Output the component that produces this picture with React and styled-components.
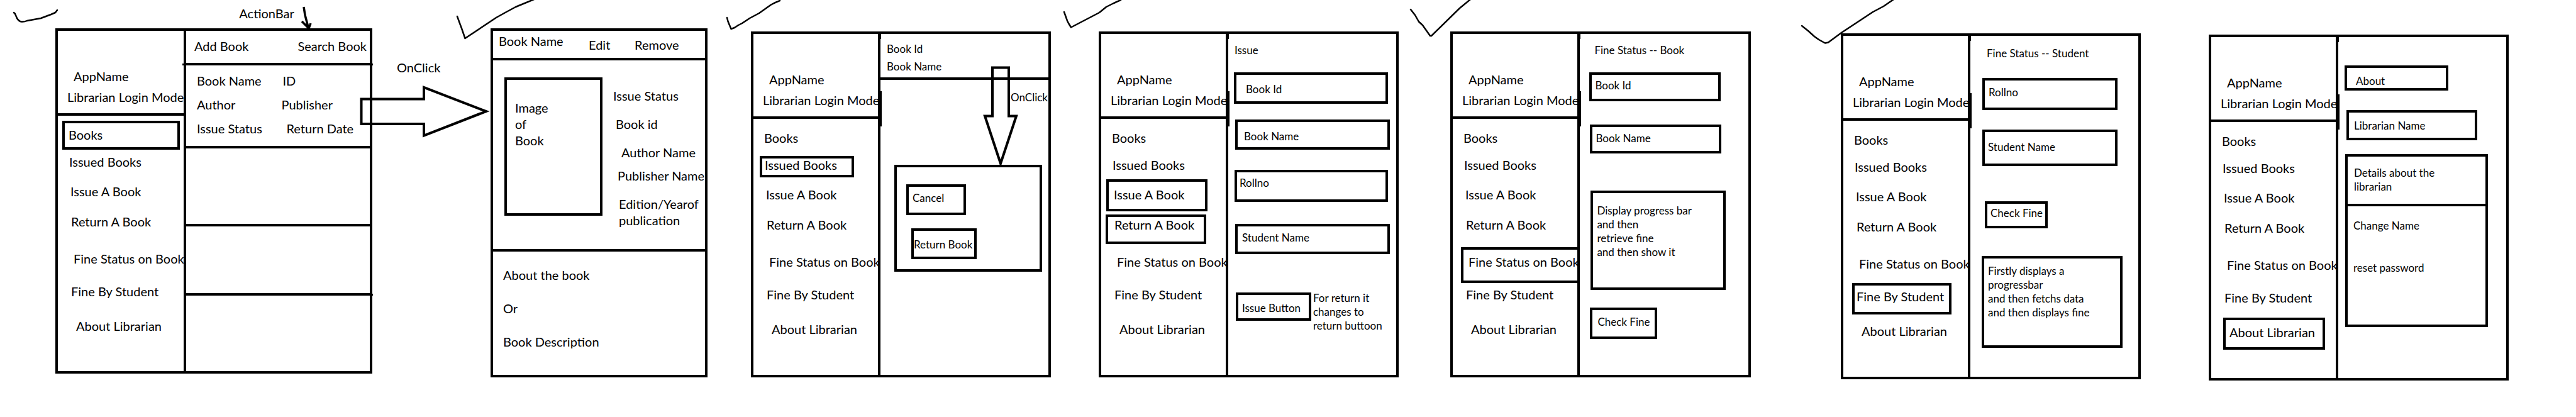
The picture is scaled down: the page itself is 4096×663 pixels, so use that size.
import React from "react";
import styled, { createGlobalStyle } from "styled-components";

const GlobalStyle = createGlobalStyle`
  * { box-sizing: border-box; }
  body { margin: 0; background: #fff; }
  h1, h2, p, ul { margin: 0; padding: 0; font: inherit; }
  ul { list-style: none; }
`;

const ink = "#000";
const stroke = `4px solid ${ink}`;
const flex = (n) => `minmax(0, ${n}fr)`;
const columns = (...parts) => parts.map(flex).join(" ");

/* ---------- board ---------- */

const Board = styled.main`
  position: relative;
  display: grid;
  grid-template-columns: ${columns(88, 504, 188, 345, 69, 477, 76, 477, 82, 478, 143, 477, 108, 477, 107)};
  align-items: start;
  padding-bottom: 57px;
  overflow: hidden;
  color: ${ink};
  background: #fff;
  font: 20px/26px Lato, "Open Sans", sans-serif;
  white-space: nowrap;
`;

const Slot = styled.section`
  grid-column: ${(p) => p.$col};
  grid-row: 1;
  padding-top: ${(p) => p.$top || 0}px;
`;

const Caption = styled.p`
  height: 45px;
  padding: 8px 0 0 58%;
`;

const FlowNote = styled.p`
  grid-column: 3;
  grid-row: 1;
  padding: 94px 0 0 39px;
`;

const Screen = styled.div`
  display: grid;
  grid-template-columns: ${(p) => p.$split || columns(202, 267)};
  height: ${(p) => p.$height || 550}px;
  border: ${stroke};
`;

const Markup = styled.svg`
  position: absolute;
  top: 0;
  left: 0;
  width: 100%;
  height: auto;
  pointer-events: none;
`;

/* ---------- sidebar ---------- */

const Sidebar = styled.aside`
  border-right: ${stroke};
`;

const SideHeader = styled.header`
  display: flex;
  flex-direction: column;
  gap: 7px;
  height: 135px;
  padding: 59px 0 0 15px;
  border-bottom: ${stroke};
`;

const AppTitle = styled.h1`
  padding-left: 10px;
`;

const NavItem = styled.li`
  margin: ${(p) => p.$gap}px 0 0 ${(p) => p.$left}px;
`;

const NavLink = styled.a`
  display: block;
  width: ${(p) => (p.$width ? `${p.$width}px` : "100%")};
  height: ${(p) => p.$height}px;
  padding: ${(p) => p.$pad};
  border: 4px solid ${(p) => (p.$boxed ? ink : "transparent")};
  ${(p) => !p.$width && "border-right: 0;"}
  color: inherit;
  line-height: 18px;
  text-decoration: none;
`;

const NAV = [
  { label: "Books", gap: 8, left: 7, width: 187, height: 46, pad: "9px 0 0 6px" },
  { label: "Issued Books", gap: 5, left: 10, width: 150, height: 34, pad: "1px 0 0 4px" },
  { label: "Issue A Book", gap: 3, left: 8, width: 161, height: 51, pad: "11px 0 0 8px" },
  { label: "Return A Book", gap: 5, left: 7, width: 160, height: 47, pad: "3px 0 0 10px" },
  { label: "Fine Status on Book", gap: 5, left: 13, height: 57, pad: "10px 0 0 8px" },
  { label: "Fine By Student", gap: -3, left: 14, width: 158, height: 50, pad: "8px 0 0 3px" },
  { label: "About Librarian", gap: 3, left: 19, width: 162, height: 51, pad: "10px 0 0 6px" },
];

function Menu({ boxed }) {
  return (
    <Sidebar>
      <SideHeader>
        <AppTitle>AppName</AppTitle>
        <p>Librarian Login Mode</p>
      </SideHeader>
      <nav>
        <ul>
          {NAV.map((n) => (
            <NavItem key={n.label} $gap={n.gap} $left={n.left}>
              <NavLink
                href="#"
                $width={n.width}
                $height={n.height}
                $pad={n.pad}
                $boxed={boxed.includes(n.label)}
              >
                {n.label}
              </NavLink>
            </NavItem>
          ))}
        </ul>
      </nav>
    </Sidebar>
  );
}

/* ---------- shared parts ---------- */

const Content = styled.div`
  display: flex;
  flex-direction: column;
  min-width: 0;
`;

const SmallContent = styled(Content)`
  font-size: 17px;
  line-height: 22px;
`;

const PlainButton = styled.button`
  padding: 0;
  border: 0;
  background: none;
  color: inherit;
  font: inherit;
  text-align: left;
  white-space: nowrap;
  cursor: pointer;
`;

const BoxButton = styled(PlainButton)`
  display: flex;
  align-items: flex-start;
  flex: none;
  width: ${(p) => p.$width}px;
  height: ${(p) => p.$height}px;
  margin: ${(p) => p.$margin};
  padding: ${(p) => p.$pad};
  border: ${stroke};
`;

const Field = styled.input`
  flex: none;
  min-width: 0;
  height: ${(p) => p.$height}px;
  margin: ${(p) => p.$margin};
  padding: ${(p) => `${p.$y}px 0 ${p.$height - 30 - p.$y}px ${p.$x}px`};
  border: ${stroke};
  border-radius: 0;
  outline: 0;
  background: transparent;
  color: inherit;
  font: inherit;
`;

const Heading = styled.h2`
  padding: ${(p) => p.$pad};
`;

const Frame = styled.div`
  flex: none;
  height: ${(p) => p.$height}px;
  margin: ${(p) => p.$margin};
  padding: ${(p) => p.$pad || 0};
  border: ${stroke};
`;

/* ---------- book list ---------- */

const ActionBar = styled.div`
  display: flex;
  align-items: flex-start;
  justify-content: space-between;
  height: 55px;
  padding: 11px 5px 0 13px;
  border-bottom: ${stroke};
`;

const BookRow = styled.div`
  display: grid;
  grid-template-columns: ${columns(134, 140)};
  grid-template-rows: 26px 26px 26px;
  row-gap: 12px;
  height: ${(p) => p.$height}px;
  padding: 11px 0 0 17px;
  border-bottom: ${(p) => (p.$last ? 0 : stroke)};
`;

const Cell = styled.span`
  padding-left: ${(p) => p.$indent || 0}px;
`;

/* ---------- book details ---------- */

const DetailBar = styled.div`
  display: grid;
  grid-template-columns: ${columns(143, 73, 112)};
  align-items: start;
  height: 47px;
  padding: 3px 0 0 9px;
  border-bottom: ${stroke};
`;

const DetailAction = styled(PlainButton)`
  padding-top: 6px;
`;

const DetailBody = styled.div`
  display: grid;
  grid-template-columns: ${columns(191, 146)};
  height: 304px;
  border-bottom: ${stroke};
`;

const Facts = styled.ul`
  display: flex;
  flex-direction: column;
  gap: 19px;
  padding-top: 43px;
`;

const Fact = styled.li`
  padding-left: ${(p) => p.$indent || 0}px;
`;

const Tight = styled(Fact)`
  margin-top: -8px;
`;

const About = styled.div`
  display: flex;
  flex-direction: column;
  gap: 27px;
  padding: 24px 0 0 16px;
`;

/* ---------- issued books ---------- */

const IssuedBar = styled.div`
  display: flex;
  flex-direction: column;
  gap: 6px;
  height: 73px;
  padding: 13px 0 0 10px;
  border-bottom: ${stroke};
`;

const ClickNote = styled.p`
  padding: 17px 1px 0 0;
  text-align: right;
`;

/* ---------- issue form, about ---------- */

const ActionRow = styled.div`
  display: flex;
  align-items: flex-start;
  gap: 3px;
  margin: 59px 0 0 12px;
`;

const Details = styled.div`
  height: 79px;
  padding: 15px 0 0 10px;
  border-bottom: ${stroke};
`;

const Options = styled.div`
  display: flex;
  flex-direction: column;
  align-items: flex-start;
  gap: 45px;
  padding: 20px 0 0 9px;
`;

/* ---------- hand-drawn marks ---------- */

const TICKS = [
  "M22 20L24 22L27 29Q30 34 34 34.500Q39 35 43 33L65 29L81 23L88 20L91 16",
  "M727 26L731 37L734 45L739.500 61L789 28Q805 19 820 11L849 -1",
  "M1156 28L1157.500 34L1162.500 46L1168 44L1174 40L1180 37L1192 29L1207 21L1226 7.500Q1232 4 1240 1",
  "M1692 19L1697 33L1699 37L1703 43.500L1748 20L1759 11L1771 5L1782 0",
  "M2243 15L2250 24L2256 34.500L2262 40L2274 57L2276 57L2321 13L2338 -1",
  "M2865 41L2875 49L2885 58L2892 63L2902 68.500L2907 67.500L2928 52L2978 19L2995 10L3011 -1",
];

const DIVIDERS = [
  [1400, 50],
  [1953, 50],
  [2512, 50],
  [3133, 53],
  [3718, 55],
];

function Marks() {
  return (
    <Markup viewBox="0 0 4096 663" fill="none" stroke={ink} aria-hidden="true">
      <g strokeWidth="2.500" strokeLinecap="round" strokeLinejoin="round">
        {TICKS.map((d) => (
          <path key={d} d={d} />
        ))}
      </g>
      <path strokeWidth="3.500" d="M483 11L485 24L490 43M480 34L491 45L494 37" />
      <path strokeWidth="4" d="M574.500 157.500H674V139L773 177L674 215.500V197H574.500Z" />
      <path strokeWidth="4" d="M1578 107.500H1604V184.500H1616L1591 260L1566 184.500H1578Z" />
      <g fill={ink} stroke="none">
        {DIVIDERS.map(([x, y]) => (
          <React.Fragment key={x}>
            <rect x={x} y={y} width="1" height="12" />
            <rect x={x} y={y + 95} width="2" height="56" />
          </React.Fragment>
        ))}
        <rect x="290" y="101" width="3" height="3" />
        <rect x="592" y="101" width="1" height="3" />
        <rect x="592" y="467" width="1" height="3" />
      </g>
    </Markup>
  );
}

export default function App() {
  return (
    <>
      <GlobalStyle />
      <Board>
        <Slot $col={2}>
          <Caption>ActionBar</Caption>
          <Screen $height={549} $split={columns(204, 292)}>
            <Menu boxed={["Books"]} />
            <Content>
              <ActionBar>
                <PlainButton>Add Book</PlainButton>
                <PlainButton>Search Book</PlainButton>
              </ActionBar>
              <BookRow $height={132}>
                <Cell>Book Name</Cell>
                <Cell $indent={2}>ID</Cell>
                <Cell>Author</Cell>
                <Cell>Publisher</Cell>
                <Cell>Issue Status</Cell>
                <Cell $indent={8}>Return Date</Cell>
              </BookRow>
              <BookRow $height={124} />
              <BookRow $height={110} />
              <BookRow $height={120} $last />
            </Content>
          </Screen>
        </Slot>

        <FlowNote>OnClick</FlowNote>

        <Slot $col={4} $top={45}>
          <Screen $height={555} $split={columns(1)}>
            <Content>
              <DetailBar>
                <h2>Book Name</h2>
                <DetailAction>Edit</DetailAction>
                <DetailAction>Remove</DetailAction>
              </DetailBar>
              <DetailBody>
                <Frame $height={220} $margin="27px 17px 0 18px" $pad="31px 0 0 13px">
                  Image
                  <br />
                  of
                  <br />
                  Book
                </Frame>
                <Facts>
                  <Fact>Issue Status</Fact>
                  <Fact $indent={4}>Book id</Fact>
                  <Fact $indent={13}>Author Name</Fact>
                  <Tight $indent={7}>Publisher Name</Tight>
                  <Fact $indent={9}>
                    Edition/Yearof
                    <br />
                    publication
                  </Fact>
                </Facts>
              </DetailBody>
              <About>
                <p>About the book</p>
                <p>Or</p>
                <p>Book Description</p>
              </About>
            </Content>
          </Screen>
        </Slot>

        <Slot $col={6} $top={50}>
          <Screen>
            <Menu boxed={["Issued Books"]} />
            <SmallContent>
              <IssuedBar>
                <p>Book Id</p>
                <p>Book Name</p>
              </IssuedBar>
              <ClickNote>OnClick</ClickNote>
              <Frame $height={170} $margin="96px 10px 0 22px">
                <BoxButton $width={95} $height={49} $margin="27px 0 0 15px" $pad="7px 0 0 6px">
                  Cancel
                </BoxButton>
                <BoxButton $width={104} $height={49} $margin="21px 0 0 23px" $pad="11px 0 0 0">
                  Return Book
                </BoxButton>
              </Frame>
            </SmallContent>
          </Screen>
        </Slot>

        <Slot $col={8} $top={50}>
          <Screen>
            <Menu boxed={["Issue A Book", "Return A Book"]} />
            <SmallContent>
              <Heading $pad="15px 0 0 10px">Issue</Heading>
              <Field aria-label="Book Id" defaultValue="Book Id" $height={50} $margin="24px 13px 0 9px" $x={15} $y={11} />
              <Field aria-label="Book Name" defaultValue="Book Name" $height={48} $margin="25px 10px 0 11px" $x={10} $y={11} />
              <Field aria-label="Rollno" defaultValue="Rollno" $height={51} $margin="32px 13px 0 10px" $x={4} $y={5} />
              <Field aria-label="Student Name" defaultValue="Student Name" $height={48} $margin="35px 10px 0 11px" $x={7} $y={6} />
              <ActionRow>
                <BoxButton $width={120} $height={45} $margin="2px 0 0" $pad="10px 0 0 6px">
                  Issue Button
                </BoxButton>
                <p>
                  For return it
                  <br />
                  changes to
                  <br />
                  return buttoon
                </p>
              </ActionRow>
            </SmallContent>
          </Screen>
        </Slot>

        <Slot $col={10} $top={50}>
          <Screen>
            <Menu boxed={["Fine Status on Book"]} />
            <SmallContent>
              <Heading $pad="15px 0 0 23px">Fine Status -- Book</Heading>
              <Field aria-label="Book Id" defaultValue="Book Id" $height={46} $margin="24px 44px 0 15px" $x={5} $y={5} />
              <Field aria-label="Book Name" defaultValue="Book Name" $height={46} $margin="37px 43px 0 16px" $x={5} $y={6} />
              <Frame $height={158} $margin="59px 36px 0 17px" $pad="17px 0 0 6px">
                Display progress bar
                <br />
                and then
                <br />
                retrieve fine
                <br />
                and then show it
              </Frame>
              <BoxButton $width={107} $height={50} $margin="28px 0 0 16px" $pad="8px 0 0 8px">
                Check Fine
              </BoxButton>
            </SmallContent>
          </Screen>
        </Slot>

        <Slot $col={12} $top={53}>
          <Screen>
            <Menu boxed={["Fine By Student"]} />
            <SmallContent>
              <Heading $pad="17px 0 0 26px">Fine Status -- Student</Heading>
              <Field aria-label="Rollno" defaultValue="Rollno" $height={51} $margin="28px 33px 0 19px" $x={6} $y={7} />
              <Field aria-label="Student Name" defaultValue="Student Name" $height={58} $margin="31px 33px 0 19px" $x={5} $y={12} />
              <BoxButton $width={100} $height={43} $margin="56px 0 0 23px" $pad="4px 0 0 5px">
                Check Fine
              </BoxButton>
              <Frame $height={146} $margin="44px 25px 0 18px" $pad="9px 0 0 6px">
                Firstly displays a
                <br />
                progressbar
                <br />
                and then fetchs data
                <br />
                and then displays fine
              </Frame>
            </SmallContent>
          </Screen>
        </Slot>

        <Slot $col={14} $top={55}>
          <Screen>
            <Menu boxed={["About Librarian"]} />
            <SmallContent>
              <Frame as="h2" $height={40} $margin="45px 92px 0 10px" $pad="10px 0 0 14px">
                About
              </Frame>
              <Field aria-label="Librarian Name" defaultValue="Librarian Name" $height={48} $margin="31px 46px 0 13px" $x={8} $y={9} />
              <Frame $height={275} $margin="22px 29px 0 11px">
                <Details>
                  Details about the
                  <br />
                  librarian
                </Details>
                <Options>
                  <PlainButton>Change Name</PlainButton>
                  <PlainButton>reset password</PlainButton>
                </Options>
              </Frame>
            </SmallContent>
          </Screen>
        </Slot>

        <Marks />
      </Board>
    </>
  );
}
